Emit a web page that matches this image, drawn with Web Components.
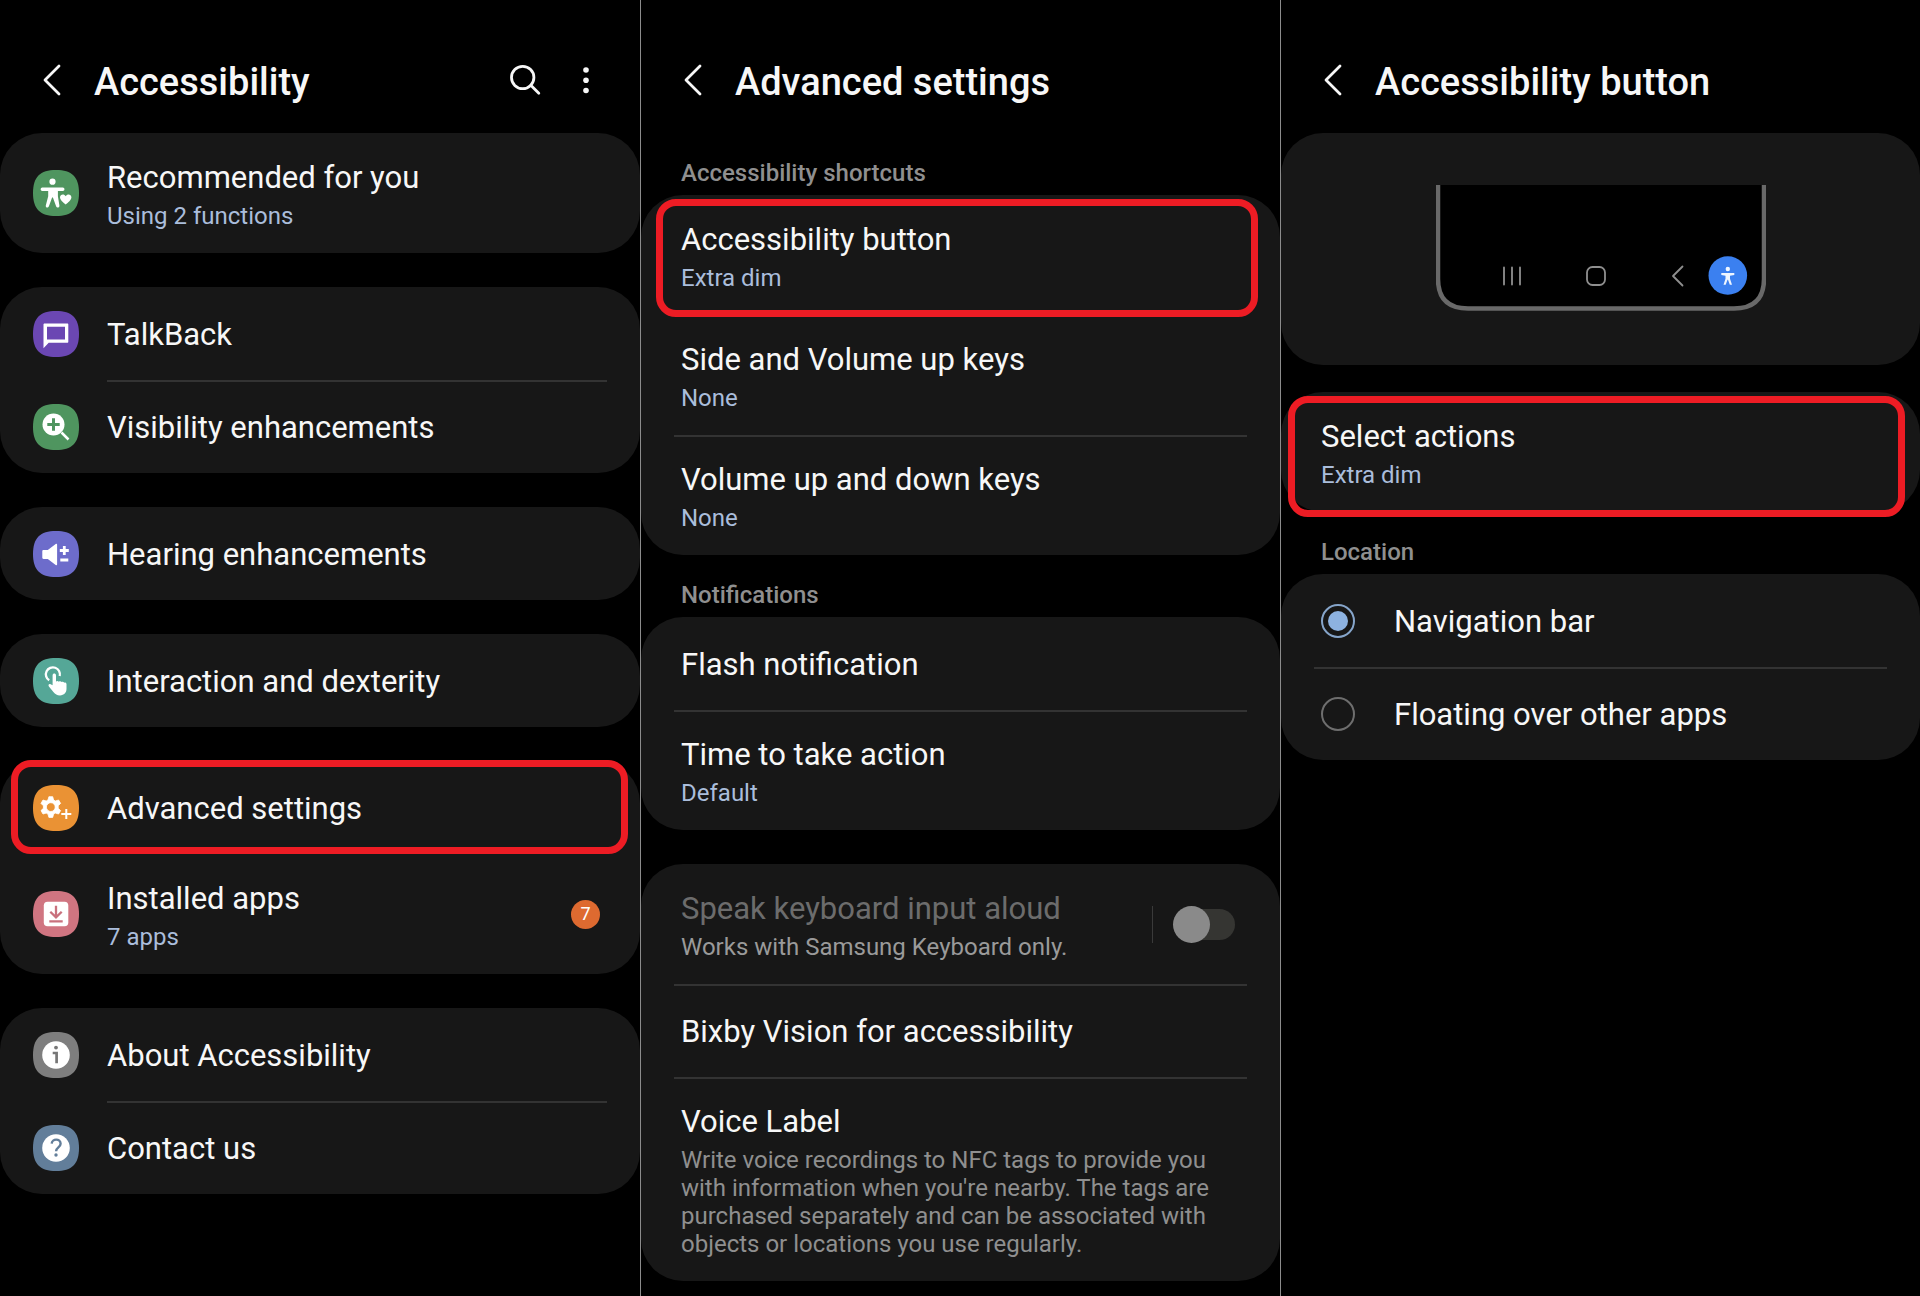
<!DOCTYPE html>
<html lang="en">
<head>
<meta charset="utf-8">
<meta name="viewport" content="width=device-width, initial-scale=1">
<title>Accessibility</title>
<style>
	body {
		margin: 0;
		background: #000;
		color: #f7f7f7;
		font-family: Roboto, "Liberation Sans", sans-serif;
	}
	main {
		display: grid;
		grid-template-columns: repeat(3, 1fr);
		min-height: 100vh;
	}
</style>
</head>
<body>
<main>
	<settings-panel>
		<span slot="title">Accessibility</span>
		<panel-actions slot="actions"></panel-actions>

		<settings-card>
			<settings-row>
				<app-icon slot="icon" name="recommended"></app-icon>
				Recommended for you
				<span slot="summary">Using 2 functions</span>
			</settings-row>
		</settings-card>

		<settings-card>
			<settings-row>
				<app-icon slot="icon" name="talkback"></app-icon>
				TalkBack
			</settings-row>
			<settings-row divider="text">
				<app-icon slot="icon" name="visibility"></app-icon>
				Visibility enhancements
			</settings-row>
		</settings-card>

		<settings-card>
			<settings-row>
				<app-icon slot="icon" name="hearing"></app-icon>
				Hearing enhancements
			</settings-row>
		</settings-card>

		<settings-card>
			<settings-row>
				<app-icon slot="icon" name="interaction"></app-icon>
				Interaction and dexterity
			</settings-row>
		</settings-card>

		<settings-card>
			<settings-row highlight="icons">
				<app-icon slot="icon" name="advanced"></app-icon>
				Advanced settings
			</settings-row>
			<settings-row>
				<app-icon slot="icon" name="installed"></app-icon>
				Installed apps
				<span slot="summary">7 apps</span>
				<count-badge slot="end">7</count-badge>
			</settings-row>
		</settings-card>

		<settings-card>
			<settings-row>
				<app-icon slot="icon" name="about"></app-icon>
				About Accessibility
			</settings-row>
			<settings-row divider="text">
				<app-icon slot="icon" name="contact"></app-icon>
				Contact us
			</settings-row>
		</settings-card>
	</settings-panel>

	<settings-panel ruled>
		<span slot="title">Advanced settings</span>

		<section-label>Accessibility shortcuts</section-label>
		<settings-card>
			<settings-row highlight="inner">
				Accessibility button
				<span slot="summary">Extra dim</span>
			</settings-row>
			<settings-row>
				Side and Volume up keys
				<span slot="summary">None</span>
			</settings-row>
			<settings-row divider="full">
				Volume up and down keys
				<span slot="summary">None</span>
			</settings-row>
		</settings-card>

		<section-label>Notifications</section-label>
		<settings-card>
			<settings-row>Flash notification</settings-row>
			<settings-row divider="full">
				Time to take action
				<span slot="summary">Default</span>
			</settings-row>
		</settings-card>

		<settings-card>
			<switch-row>
				Speak keyboard input aloud
				<span slot="summary">Works with Samsung Keyboard only.</span>
			</switch-row>
			<settings-row divider="full">Bixby Vision for accessibility</settings-row>
			<settings-row divider="full" muted>
				Voice Label
				<span slot="summary">Write voice recordings to NFC tags to provide you with information when you're nearby. The tags are purchased separately and can be associated with objects or locations you use regularly.</span>
			</settings-row>
		</settings-card>
	</settings-panel>

	<settings-panel ruled>
		<span slot="title">Accessibility button</span>

		<settings-card>
			<navbar-preview></navbar-preview>
		</settings-card>

		<settings-card close>
			<settings-row highlight="wide">
				Select actions
				<span slot="summary">Extra dim</span>
			</settings-row>
		</settings-card>

		<section-label>Location</section-label>
		<settings-card>
			<location-options></location-options>
		</settings-card>
	</settings-panel>
</main>

<script>
(function() {
	// look shared by every kind of row
	const rowStyles = `
		:host {
			display: block;
			position: relative;
		}
		.row {
			display: flex;
			align-items: center;
			box-sizing: border-box;
			width: 100%;
			min-height: 93px;
			margin: 0;
			padding: 0 40px;
			border: 0;
			background: none;
			color: inherit;
			font: inherit;
			text-align: left;
			cursor: pointer;
		}
		.text {
			flex: 1;
			min-width: 0;
			padding: 26px 0 23px;
		}
		.title {
			display: block;
			font-size: 31px;
			line-height: 38px;
		}
		.summary {
			display: block;
			color: #aabddb;
			font-size: 24px;
			line-height: 28px;
		}
		::slotted([slot="summary"]) {
			display: block;
			padding-top: 5px;
		}
	`;

	function define(name, html, setup) {
		const template = document.createElement("template");
		template.innerHTML = html;
		customElements.define(name, class extends HTMLElement {
			constructor() {
				super();
				this.attachShadow({mode: "open"});
				this.shadowRoot.appendChild(template.content.cloneNode(true));
			}

			connectedCallback() {
				if (setup) {
					setup(this, this.shadowRoot);
				}
			}
		});
	}

	define("settings-panel", `
		<style>
			:host {
				display: block;
				min-width: 0;
			}
			:host([ruled]) {
				border-left: 1px solid #8c8c8c;
			}
			header {
				display: flex;
				align-items: center;
				box-sizing: border-box;
				height: 133px;
				padding: 30px 40px 0 32px;
			}
			button {
				display: flex;
				padding: 0;
				border: 0;
				background: none;
				color: inherit;
				cursor: pointer;
			}
			h1 {
				flex: 1;
				margin: 0 0 0 22px;
				font-size: 38px;
				font-weight: 500;
				line-height: 44px;
			}
		</style>
		<header>
			<button type="button" aria-label="Back">
				<svg width="40" height="40" viewBox="0 0 40 40" fill="none" stroke="currentColor" stroke-width="2.800" stroke-linecap="round" stroke-linejoin="round"><path d="M27 4 13 18 27 32"/></svg>
			</button>
			<h1><slot name="title"></slot></h1>
			<slot name="actions"></slot>
		</header>
		<slot></slot>
	`);

	define("panel-actions", `
		<style>
			:host {
				display: flex;
				gap: 24px;
			}
			button {
				display: flex;
				padding: 0;
				border: 0;
				background: none;
				color: inherit;
				cursor: pointer;
			}
		</style>
		<button type="button" aria-label="Search">
			<svg width="40" height="40" viewBox="0 0 40 40" fill="none" stroke="currentColor" stroke-width="2.800" stroke-linecap="round"><circle cx="14.700" cy="15.500" r="11.200"/><path d="m22.800 23.300 8 8"/></svg>
		</button>
		<button type="button" aria-label="More options">
			<svg width="28" height="40" viewBox="0 0 28 40" fill="currentColor"><circle cx="14" cy="8" r="2.800"/><circle cx="14" cy="18.200" r="2.800"/><circle cx="14" cy="28.500" r="2.800"/></svg>
		</button>
	`);

	define("section-label", `
		<style>
			:host {
				display: block;
				padding: 26px 40px 8px;
				color: #8f8f8f;
				font-size: 24px;
				font-weight: 500;
				line-height: 28px;
			}
		</style>
		<slot></slot>
	`);

	define("settings-card", `
		<style>
			:host {
				display: block;
				border-radius: 42px;
				background: #171717;
			}
			:host(.stacked) {
				margin-top: 34px;
			}
			:host(.stacked[close]) {
				margin-top: 27px;
			}
		</style>
		<slot></slot>
	`, function(host) {
		const previous = host.previousElementSibling;
		host.classList.toggle("stacked", !!previous && previous.localName === "settings-card");
	});

	define("settings-row", `
		<style>
			${rowStyles}
			:host([divider="text"]) {
				background: linear-gradient(#333, #333) 107px 0 / calc(100% - 140px) 2px no-repeat;
			}
			:host([divider="full"]) {
				background: linear-gradient(#333, #333) 33px 0 / calc(100% - 66px) 2px no-repeat;
			}
			:host([muted]) .summary {
				color: #8f8f8f;
			}
			.row.with-icon {
				gap: 28px;
				padding-left: 33px;
			}
			.mark {
				display: none;
				position: absolute;
				z-index: 1;
				border: 7px solid #ed1c24;
				border-radius: 20px;
				pointer-events: none;
			}
			:host([highlight]) .mark {
				display: block;
			}
			:host([highlight="icons"]) .mark {
				inset: -1px 12px 0 11px;
			}
			:host([highlight="inner"]) .mark {
				inset: 4px 22px -2px 15px;
			}
			:host([highlight="wide"]) .mark {
				inset: 4px 15px -5px 7px;
			}
		</style>
		<button class="row" type="button">
			<slot name="icon"></slot>
			<span class="text">
				<span class="title"><slot></slot></span>
				<span class="summary"><slot name="summary"></slot></span>
			</span>
			<slot name="end"></slot>
		</button>
		<span class="mark"></span>
	`, function(host, root) {
		root.querySelector(".row").classList.toggle("with-icon", !!host.querySelector("[slot=icon]"));
	});

	define("switch-row", `
		<style>
			${rowStyles}
			.row {
				padding-right: 45px;
				cursor: default;
			}
			.title {
				color: #6c6c6c;
			}
			.summary {
				color: #9a9a9a;
			}
			.end {
				display: flex;
				align-items: center;
				height: 37px;
				padding-left: 22px;
				border-left: 1px solid #3a3a3a;
			}
			input {
				display: flex;
				align-items: center;
				appearance: none;
				width: 60px;
				height: 31px;
				margin: 0;
				border-radius: 16px;
				background: #353532;
			}
			input::before {
				content: "";
				flex: none;
				width: 37px;
				height: 37px;
				margin-left: -2px;
				border-radius: 50%;
				background: #8a8a8a;
			}
		</style>
		<label class="row">
			<span class="text">
				<span class="title"><slot></slot></span>
				<span class="summary"><slot name="summary"></slot></span>
			</span>
			<span class="end"><input type="checkbox" role="switch" disabled></span>
		</label>
	`);

	define("count-badge", `
		<style>
			:host {
				width: 29px;
				height: 29px;
				border-radius: 50%;
				background: #de6a30;
				color: #fff;
				font-size: 18px;
				line-height: 28px;
				text-align: center;
			}
		</style>
		<slot></slot>
	`);

	define("location-options", `
		<style>
			${rowStyles}
			fieldset {
				margin: 0;
				padding: 0;
				border: 0;
			}
			.row {
				gap: 39px;
			}
			.row + .row {
				background: linear-gradient(#333, #333) 33px 0 / calc(100% - 66px) 2px no-repeat;
			}
			input {
				appearance: none;
				display: grid;
				place-items: center;
				box-sizing: border-box;
				width: 34px;
				height: 34px;
				margin: 0;
				border: 2px solid #6e6e6e;
				border-radius: 50%;
			}
			input:checked {
				border-color: #86a5ca;
			}
			input:checked::before {
				content: "";
				width: 20px;
				height: 20px;
				border-radius: 50%;
				background: #8db2e0;
			}
		</style>
		<fieldset aria-label="Location">
			<label class="row">
				<input type="radio" name="location" value="navigation" checked>
				<span class="text"><span class="title">Navigation bar</span></span>
			</label>
			<label class="row">
				<input type="radio" name="location" value="floating">
				<span class="text"><span class="title">Floating over other apps</span></span>
			</label>
		</fieldset>
	`);

	define("navbar-preview", `
		<style>
			:host {
				display: flex;
				justify-content: center;
				padding: 52px 0 54px;
			}
		</style>
		<svg width="330" height="126" viewBox="0 0 330 126" fill="none" role="img" aria-label="Navigation bar preview">
			<path d="M2 0V94Q2 123.500 32 123.500H298Q328 123.500 328 94V0" fill="#000" stroke="#696969" stroke-width="4.500"/>
			<g stroke="#8f8f8f" stroke-width="1.800" stroke-linecap="round" stroke-linejoin="round">
				<path d="M68 82.500v17M76 82.500v17M84 82.500v17"/>
				<rect x="151" y="82" width="18" height="18" rx="5.500"/>
				<path d="m246.500 81.500-9.500 9.500 9.500 9.500"/>
			</g>
			<circle cx="291.800" cy="90.500" r="19.300" fill="#3b80f0"/>
			<circle cx="291.800" cy="84" r="2.200" fill="#eef5ff"/>
			<path d="M285.300 88h13v2l-4.300.8v3l2 6h-2.200l-1.800-5h-.5l-1.800 5h-2.200l2-6v-3l-4.200-.8z" fill="#eef5ff"/>
		</svg>
	`);

	const icons = {
		recommended: ["#4f955f", `
			<circle cx="19.500" cy="11.700" r="3.100"/>
			<path d="M9.300 17.500h20.500a1.700 1.700 0 0 1 0 3.400h-4.900v5.300l1.500 9.200c.3 2.500-2.700 2.700-3.300.8l-3.200-8.700h-.8l-3.200 8.700c-.8 1.900-3.600 1.500-3.100-.8l2.400-9.200v-5.300H9.300a1.700 1.700 0 0 1 0-3.400z"/>
			<path d="M32.700 34.500c-2.400-2-5.700-4.300-5.700-7.200 0-3.200 4.100-3.900 5.700-1.100 1.600-2.800 5.700-2.100 5.700 1.100 0 2.900-3.300 5.200-5.700 7.200z"/>`],
		talkback: ["#6b47b3", `
			<path fill-rule="evenodd" d="M11.700 12.500h22.600c.6 0 1 .4 1 1v17.300c0 .6-.4 1-1 1H15.700l-5.200 5.400V13.500c0-.6.500-1 1.200-1zm2.300 3.300v12.600h18V15.800z"/>`],
		visibility: ["#4f955f", `
			<circle cx="20.500" cy="20.500" r="11"/>
			<path d="m28.500 28.500 7 7" stroke="#fff" stroke-width="2.500"/>
			<path d="M20.500 14.300v12.400M14.300 20.500h12.400" stroke="#4f955f" stroke-width="3"/>`],
		hearing: ["#6d6ccb", `
			<path d="M10.500 18.900h4.300l7.900-6c.7-.5 1.400-.2 1.400.6v20c0 .8-.8 1.100-1.400.6l-7.900-6.200h-4.300c-.7 0-1.200-.5-1.200-1.200v-6.600c0-.7.5-1.200 1.200-1.200z"/>
			<path d="M31.300 15v9M26.800 19.500h9M27.300 29h8" stroke="#fff" stroke-width="2.800"/>`],
		interaction: ["#55a797", `
			<path d="M16.200 22.300a7 7 0 1 1 10.500-4.300" fill="none" stroke="#fff" stroke-width="2.300"/>
			<path d="M19.600 17.400c0-2.400 3.400-2.400 3.400 0v6.100c.9-1 2.300-.7 2.800.2 1-.8 2.300-.5 2.900.4.900-.6 2.100-.2 2.500.6 1-.4 2.300.2 2.300 1.400v4.700c0 3.900-2.400 6.600-6.500 6.600-3 0-4.700-.8-6.600-3.300l-4.500-5.700c-1.100-1.600.2-2.800 1.700-2.100l2 1z"/>`],
		advanced: ["#ea9234", `
			<path fill-rule="evenodd" d="m15 15 .9-3.300h3.800l.9 3.300 1.800 1 3.200-1 2 3.400-2.400 2.400v2.500l2.400 2.300-2 3.400-3.200-.9-1.800 1-.9 3.300h-3.800L15 29.100l-1.800-1-3.200.9-2-3.400 2.400-2.300v-2.500L8 18.400l2-3.400 3.200 1zm2.800 2.700a4.400 4.400 0 1 0 0 8.800 4.400 4.400 0 0 0 0-8.800z" stroke="#fff" stroke-width=".8" stroke-linejoin="round"/>
			<path d="M33.300 24v10M28.300 29h10" stroke="#fff" stroke-width="2"/>`],
		installed: ["#d07581", `
			<rect x="10.800" y="10.800" width="24.500" height="24.500" rx="3.800"/>
			<path d="M23 14.700v11M17.300 20.700l5.700 5.700 5.700-5.700M16.300 30.400h13.400" fill="none" stroke="#c9717d" stroke-width="2.300"/>`],
		about: ["#7e7e7e", `
			<circle cx="23" cy="23" r="13.800"/>
			<circle cx="23" cy="15.600" r="1.900" fill="#777"/>
			<path d="M19.700 21h3.900v10.200" fill="none" stroke="#777" stroke-width="2.700"/>`],
		contact: ["#627e9a", `
			<circle cx="23" cy="23" r="13.800"/>
			<path d="M18.700 18.600c.3-5.300 8.900-5.300 8.900.2 0 3.500-4.500 3.800-4.500 7.400" fill="none" stroke="#627e9a" stroke-width="2.400"/>
			<circle cx="23" cy="30" r="1.700" fill="#627e9a"/>`]
	};

	define("app-icon", `
		<style>
			:host {
				display: flex;
			}
		</style>
		<svg width="46" height="46" viewBox="0 0 46 46" fill="#fff" aria-hidden="true"></svg>
	`, function(host, root) {
		const [color, shapes] = icons[host.getAttribute("name")];
		root.querySelector("svg").innerHTML =
			`<path d="M23 0C39 0 46 7 46 23S39 46 23 46 0 39 0 23 7 0 23 0z" fill="${color}"/>` + shapes;
	});
})();
</script>
</body>
</html>
